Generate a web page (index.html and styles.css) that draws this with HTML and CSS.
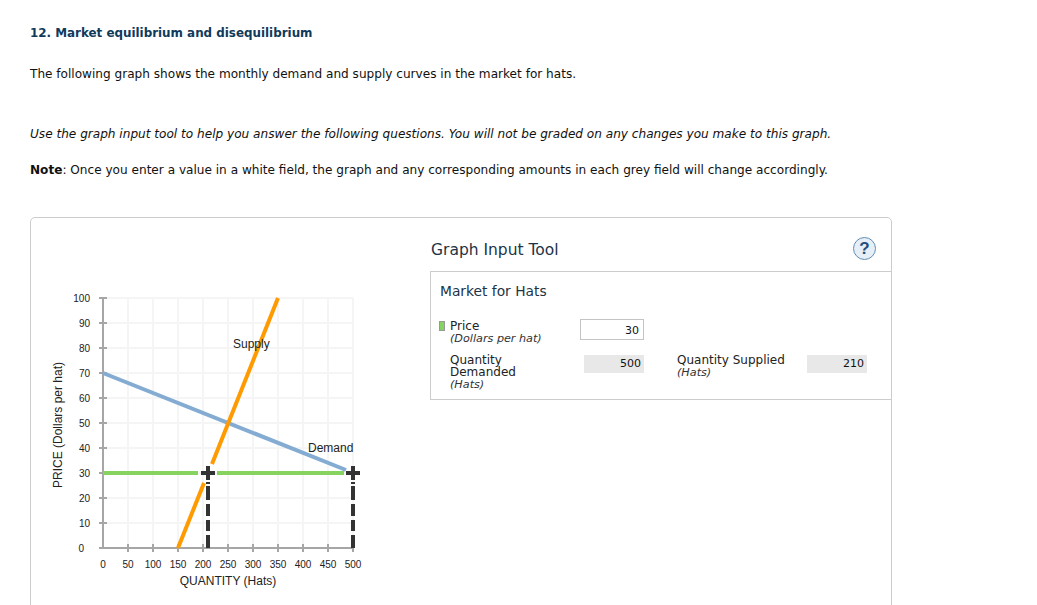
FILE: index.html
```html
<!DOCTYPE html>
<html lang="en">
<head>
  <meta charset="UTF-8">
  <meta name="viewport" content="width=device-width, initial-scale=1.0">
  <title>Market equilibrium and disequilibrium</title>
  <link rel="stylesheet" href="styles.css">
</head>
<body>

<h2 class="title">12. Market equilibrium and disequilibrium</h2>
<p class="intro">The following graph shows the monthly demand and supply curves in the market for hats.</p>
<p class="use"><em>Use the graph input tool to help you answer the following questions. You will not be graded on any changes you make to this graph.</em></p>
<p class="note"><strong>Note</strong>: Once you enter a value in a white field, the graph and any corresponding amounts in each grey field will change accordingly.</p>

<div class="panel">
  <div class="graph">
    <svg width="399" height="388" viewBox="31 218 399 388">
      <!-- grid -->
      <g stroke="#f5f5f5" stroke-width="2" fill="none">
        <path d="M128 298V548M153 298V548M178 298V548M203 298V548M228 298V548M253 298V548M278 298V548M303 298V548M328 298V548M353 298V548"/>
        <path d="M103 298H353M103 323H353M103 348H353M103 373H353M103 398H353M103 423H353M103 448H353M103 473H353M103 498H353M103 523H353"/>
      </g>
      <!-- axes and ticks -->
      <g stroke="#a6a6a6" stroke-width="2" fill="none">
        <path d="M103 298V548H353"/>
        <path d="M99 298H107M99 323H107M99 348H107M99 373H107M99 398H107M99 423H107M99 448H107M99 473H107M99 498H107M99 523H107M99 548H107"/>
        <path d="M128 544V552M153 544V552M178 544V552M203 544V552M228 544V552M253 544V552M278 544V552M303 544V552M328 544V552M353 544V552"/>
      </g>
      <g class="tick" text-anchor="end">
        <text x="90" y="302">100</text><text x="90" y="327">90</text><text x="90" y="352">80</text>
        <text x="90" y="377">70</text><text x="90" y="402">60</text><text x="90" y="427">50</text>
        <text x="90" y="452">40</text><text x="90" y="477">30</text><text x="90" y="502">20</text>
        <text x="90" y="527">10</text><text x="84" y="552">0</text>
      </g>
      <g class="tick" text-anchor="middle">
        <text x="103" y="568">0</text><text x="128" y="568">50</text><text x="153" y="568">100</text>
        <text x="178" y="568">150</text><text x="203" y="568">200</text><text x="228" y="568">250</text>
        <text x="253" y="568">300</text><text x="278" y="568">350</text><text x="303" y="568">400</text>
        <text x="328" y="568">450</text><text x="353" y="568">500</text>
      </g>
      <text class="axis" x="228" y="585" text-anchor="middle">QUANTITY (Hats)</text>
      <text class="axis" transform="translate(62 425) rotate(-90)" text-anchor="middle">PRICE (Dollars per hat)</text>
      <!-- curves -->
      <path d="M103 373L346 470" stroke="#84acd3" stroke-width="4" fill="none"/>
      <path d="M178 548L204 483M212 464L278 298" stroke="#ff9a00" stroke-width="4" fill="none"/>
      <path d="M103 473H198M217 473H344" stroke="#86d45f" stroke-width="4" fill="none"/>
      <text class="axis" x="233" y="348">Supply</text>
      <text class="axis" x="308" y="452">Demand</text>
      <!-- handles -->
      <g stroke="#333" fill="none">
        <path d="M208 482V484M208 486V500M208 504V516M208 520V531M208 535V548M353 482V484M353 486V500M353 504V516M353 520V531M353 535V548" stroke-width="4"/>
        <path d="M201 473H215M208 466V480M346 473H360M353 466V480" stroke-width="4"/>
      </g>
    </svg>
  </div>

  <div class="tool">
    <div class="tool-head">
      <h3>Graph Input Tool</h3>
      <span class="help">?</span>
    </div>
    <div class="tool-box">
      <h4>Market for Hats</h4>
      <div class="fields">
        <div class="label indent"><span class="swatch"></span>Price<em>(Dollars per hat)</em></div>
        <div class="field input">30</div>
        <div class="spacer"></div>
        <div class="label indent">Quantity<br>Demanded<em>(Hats)</em></div>
        <div class="field grey first">500</div>
        <div></div>
        <div class="label">Quantity Supplied<em>(Hats)</em></div>
        <div class="field grey">210</div>
      </div>
    </div>
  </div>
</div>

</body>
</html>
```

FILE: styles.css
```css
html, body {
  height: 605px;
  overflow: hidden;
}

body {
  font-family: Verdana, "DejaVu Sans", sans-serif;
  font-size: 12.1px;
  margin: 0;
  padding: 26px 30px 0;
  color: #111;
  background-color: white;
}

.title {
  margin: 0;
  font-size: 11.9px;
  line-height: 15px;
  color: #0f3a5c;
}

.intro {
  margin: 26px 0 0;
  line-height: 15px;
}

.use {
  margin: 45px 0 0;
  line-height: 15px;
}

.note {
  margin: 21px 0 0;
  line-height: 15px;
}

/* Graph panel runs off the bottom of the page */
.panel {
  display: flex;
  width: 860px;
  height: 420px;
  margin-top: 39px;
  border: 1px solid #ccc;
  border-radius: 5px;
}

.graph {
  width: 399px;
  flex-shrink: 0;
}

.graph svg {
  display: block;
}

.tick {
  font-family: "Liberation Sans", Arial, sans-serif;
  font-size: 10px;
  fill: #222;
}

.axis {
  font-family: "Liberation Sans", Arial, sans-serif;
  font-size: 12px;
  fill: #222;
}

.tool {
  flex: 1;
}

.tool-head {
  display: flex;
  justify-content: space-between;
  align-items: center;
  height: 53px;
  padding-right: 15px;
}

.tool-head h3 {
  margin: 10px 0 0 1px;
  font-size: 15.5px;
  font-weight: normal;
  color: #1c3446;
}

.help {
  display: flex;
  justify-content: center;
  align-items: center;
  width: 21px;
  height: 21px;
  margin-top: 8px;
  border: 1.5px solid #5f8fb5;
  border-radius: 50%;
  background-color: #e6eff7;
  font-family: "Liberation Sans", Arial, sans-serif;
  font-size: 17px;
  font-weight: bold;
  color: #1f4f7a;
}

.tool-box {
  height: 127px;
  padding: 0 0 0 9px;
  border: 1px solid #ccc;
  border-right: none;
}

.tool-box h4 {
  margin: 10px 0 0;
  font-size: 13.8px;
  line-height: 18px;
  font-weight: normal;
  color: #1c3446;
}

.fields {
  display: grid;
  grid-template-columns: 140px 64px 33px 130px 60px;
  grid-template-rows: 34px auto;
  margin-top: 19px;
}

.spacer {
  grid-column: span 3;
}

.label {
  position: relative;
  padding-top: 1px;
  font-size: 12px;
  line-height: 12px;
  color: #222;
}

.indent {
  padding-left: 10px;
}

.label em {
  display: block;
  margin-top: 1px;
  font-size: 11.2px;
  color: #333;
}

.swatch {
  position: absolute;
  left: -1px;
  top: 2px;
  width: 6px;
  height: 10px;
  background-color: #86d45f;
  border: 1px solid #999;
  box-sizing: border-box;
}

.field {
  font-size: 11px;
  text-align: right;
  color: #111;
}

.input {
  height: 21px;
  line-height: 21px;
  padding-right: 4px;
  border: 1px solid #c4c4c4;
  box-sizing: border-box;
}

.grey {
  height: 18px;
  line-height: 18px;
  margin-top: 2px;
  padding-right: 3px;
  background-color: #e8e8e8;
}

.first {
  margin-left: 4px;
}
```
